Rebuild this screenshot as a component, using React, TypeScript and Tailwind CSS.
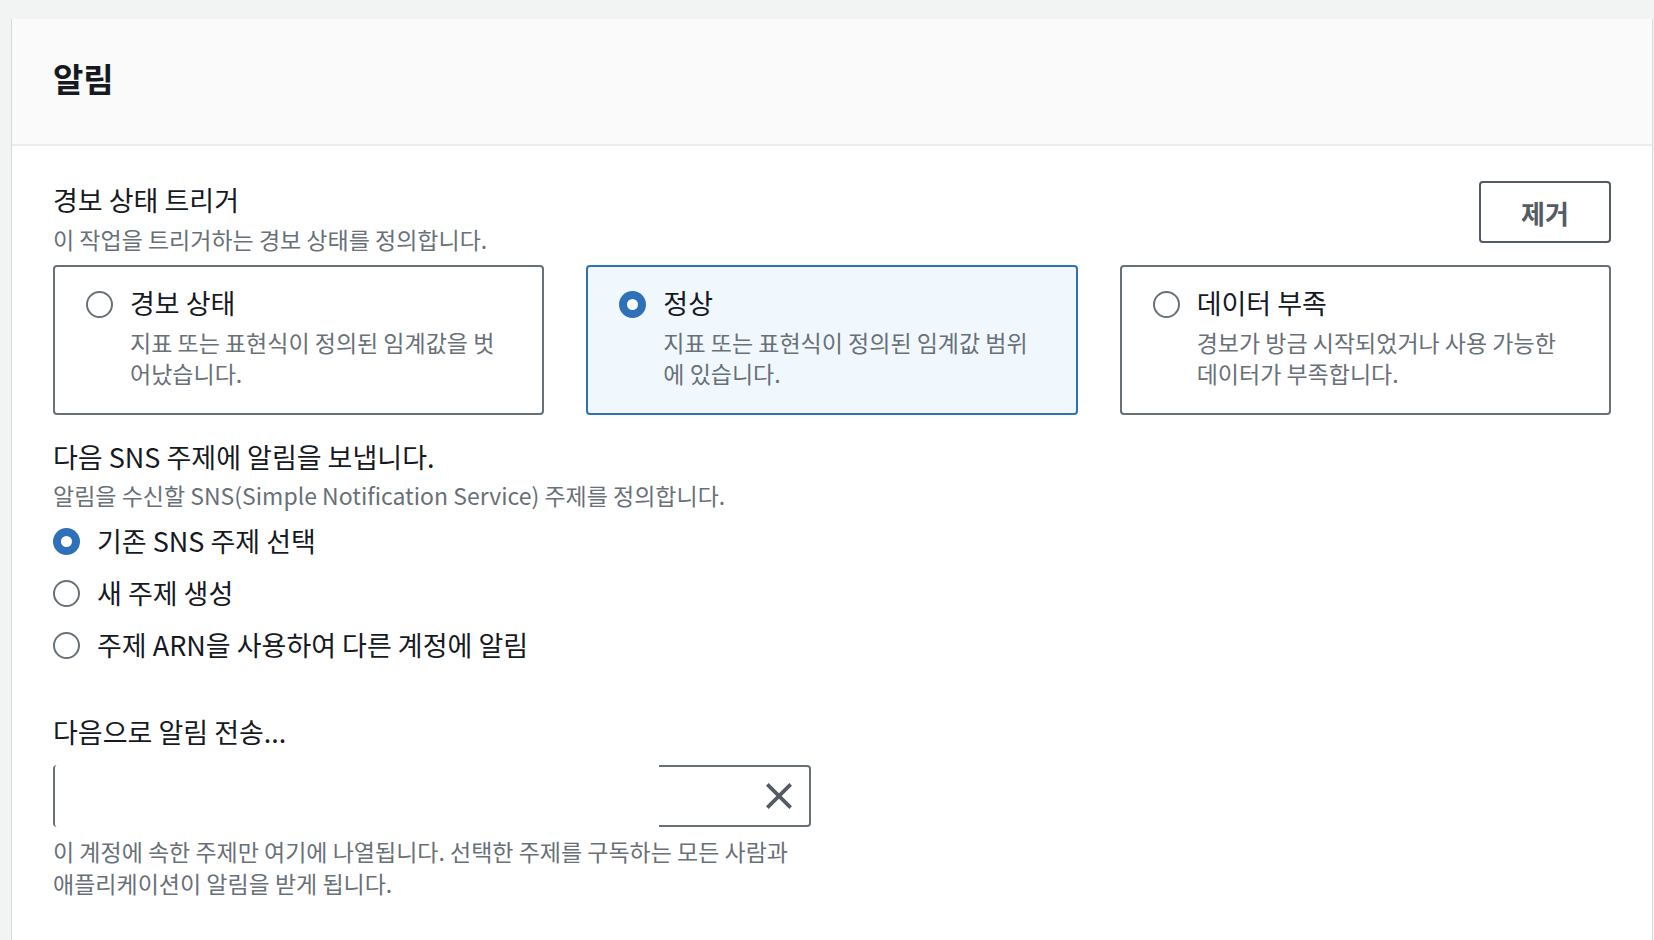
import React from 'react';

type Option = {
  title: string;
  desc: string;
  selected?: boolean;
};

const STATES: Option[] = [
  { title: '경보 상태', desc: '지표 또는 표현식이 정의된 임계값을 벗어났습니다.' },
  { title: '정상', desc: '지표 또는 표현식이 정의된 임계값 범위에 있습니다.', selected: true },
  { title: '데이터 부족', desc: '경보가 방금 시작되었거나 사용 가능한 데이터가 부족합니다.' },
];

const TOPIC_CHOICES = [
  { label: '기존 SNS 주제 선택', selected: true },
  { label: '새 주제 생성' },
  { label: '주제 ARN을 사용하여 다른 계정에 알림' },
];

function Radio({ checked }: { checked?: boolean }) {
  if (checked) {
    return (
      <span className="flex h-[27px] w-[27px] shrink-0 items-center justify-center rounded-full bg-[#2f71b8]">
        <span className="h-[11px] w-[11px] rounded-full bg-white" />
      </span>
    );
  }
  return <span className="block h-[27px] w-[27px] shrink-0 rounded-full border-2 border-[#687078] bg-white" />;
}

function StateCard({ option }: { option: Option }) {
  return (
    <div
      className={
        option.selected
          ? 'flex h-[150px] gap-[17px] rounded-[4px] border-2 border-[#2f71b8] bg-[#f1f8fd] pt-[20px] pl-[31px] pr-[38px]'
          : 'flex h-[150px] gap-[17px] rounded-[4px] border-2 border-[#687078] bg-white pt-[20px] pl-[31px] pr-[38px]'
      }
    >
      <div className="mt-[4px]">
        <Radio checked={option.selected} />
      </div>
      <div className="min-w-0 flex-1">
        <div className="text-[27px] leading-[32px] text-[#16191f]">{option.title}</div>
        <p className="mt-[8px] text-[23px] leading-[31px] text-[#687078]">{option.desc}</p>
      </div>
    </div>
  );
}

export default function App() {
  return (
    <div className="min-h-screen bg-[#f2f3f3] pt-[19px] pl-[11px] pr-[1px] font-['Noto_Sans_CJK_KR','Noto_Sans',sans-serif]">
      <div className="min-h-[921px] border-x border-[#d5dbdb] bg-white">
        <div className="flex h-[127px] items-center border-b-2 border-[#eaeded] bg-[#fafafa] px-[41px] pb-[8px]">
          <h2 className="text-[33px] font-bold leading-[40px] text-[#16191f]">알림</h2>
        </div>

        <div className="px-[41px] pt-[35px]">
          <div className="flex items-start justify-between">
            <div className="mt-[3px]">
              <h3 className="text-[27px] leading-[32px] text-[#16191f]">경보 상태 트리거</h3>
              <p className="mt-[8px] text-[23px] leading-[30px] text-[#687078]">
                이 작업을 트리거하는 경보 상태를 정의합니다.
              </p>
            </div>
            <button className="h-[62px] w-[132px] rounded-[4px] border-2 border-[#545b64] bg-white text-[26px] font-bold text-[#545b64]">
              제거
            </button>
          </div>

          <div className="mt-[11px] grid grid-cols-3 gap-[42px]">
            {STATES.map((s) => (
              <StateCard key={s.title} option={s} />
            ))}
          </div>

          <div className="mt-[26px]">
            <h3 className="text-[27px] leading-[32px] text-[#16191f]">다음 SNS 주제에 알림을 보냅니다.</h3>
            <p className="mt-[7px] text-[23px] leading-[30px] text-[#687078]">
              알림을 수신할 SNS(Simple Notification Service) 주제를 정의합니다.
            </p>
          </div>

          <div className="mt-[15px] flex flex-col gap-[20px]">
            {TOPIC_CHOICES.map((c) => (
              <div key={c.label} className="flex items-center gap-[17px]">
                <Radio checked={c.selected} />
                <span className="text-[27px] leading-[32px] text-[#16191f]">{c.label}</span>
              </div>
            ))}
          </div>

          <div className="mt-[55px] text-[27px] leading-[32px] text-[#16191f]">다음으로 알림 전송...</div>

          <div className="mt-[17px] flex h-[62px] w-[758px]">
            <div className="flex-1 rounded-l-[4px] border-l-2 border-[#687078]" />
            <div className="flex w-[152px] items-center justify-end rounded-r-[4px] border-y-2 border-r-2 border-[#687078] pr-[16px]">
              <svg width="28" height="28" viewBox="0 0 24 24" fill="none" stroke="#545b64" strokeWidth="3.2">
                <path d="M2 2 L22 22 M22 2 L2 22" />
              </svg>
            </div>
          </div>

          <p className="mt-[8px] w-[758px] break-keep text-[23px] leading-[32px] text-[#687078]">
            이 계정에 속한 주제만 여기에 나열됩니다. 선택한 주제를 구독하는 모든 사람과 애플리케이션이 알림을 받게 됩니다.
          </p>
        </div>
      </div>
    </div>
  );
}
